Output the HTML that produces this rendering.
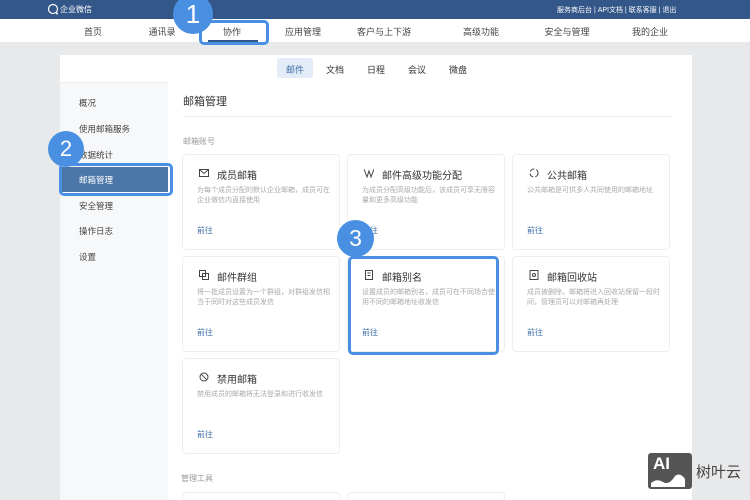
<!DOCTYPE html>
<html><head><meta charset="utf-8"><style>
*{margin:0;padding:0;box-sizing:border-box}
html{width:750px;height:500px;overflow:hidden}
body{width:750px;height:500px;overflow:hidden;background:#e8e9eb;font-family:"Liberation Sans","Noto Sans CJK SC",sans-serif;position:relative;color:#333}
.a{position:absolute}
.top{left:0;top:0;width:750px;height:19px;background:#34578a;color:#fff;font-size:8px}
.nav{left:0;top:19px;width:750px;height:23px;background:#fff;font-size:9px;color:#444}
.nav span{position:absolute;top:6px;transform:translateX(-50%)}
.panel{left:60px;top:55px;width:632px;height:445px;background:#fff}
.sub span{position:absolute;top:63px;font-size:9px;color:#333;transform:translateX(-50%)}
.side{left:60px;top:82px;width:108px;height:418px;background:#f7f8fa;border-top:1px solid #eee}
.si{position:absolute;left:79px;font-size:8.5px;color:#444}
.card{position:absolute;width:158px;height:96px;border:1px solid #eee;border-radius:4px;background:#fff}
.card .t{position:absolute;left:34px;top:12px;font-size:10px;color:#333}
.card .ic{position:absolute;left:16px;top:13px;width:10px;height:10px}
.card .d{position:absolute;left:14px;top:31px;width:134px;font-size:7px;line-height:10px;color:#aaa}
.card .g{position:absolute;left:14px;top:70px;font-size:8px;color:#3c6ea8}
.circ{position:absolute;border-radius:50%;background:#4a90e2;color:#fff;text-align:center;font-family:"Liberation Sans",sans-serif}
.box{position:absolute;border:3px solid #4a90e2;border-radius:5px}
</style></head><body>
<div class="a top">
<span class="a" style="left:60px;top:4px">企业微信</span>
<svg class="a" style="left:47px;top:3px" width="12" height="12" viewBox="0 0 12 12"><circle cx="6" cy="6" r="4.5" fill="none" stroke="#fff" stroke-width="1.2"/><circle cx="10" cy="10.5" r="1" fill="#fff"/></svg>
<span class="a" style="left:557px;top:5px;font-size:7px">服务商后台 | API文档 | 联系客服 | 退出</span>
</div>
<div class="a nav">
<span style="left:93px">首页</span><span style="left:162px">通讯录</span><span style="left:232px">协作</span><span style="left:303px">应用管理</span><span style="left:384px">客户与上下游</span><span style="left:481px">高级功能</span><span style="left:567px">安全与管理</span><span style="left:650px">我的企业</span>
<div class="a" style="left:208px;top:21px;width:50px;height:2px;background:#34578a"></div>
</div>
<div class="a panel"></div>
<div class="a" style="left:277px;top:58px;width:36px;height:20px;background:#e3ecf7;border-radius:2px"></div>
<div class="sub"><span style="left:295px;color:#3c6ea8">邮件</span><span style="left:335px">文档</span><span style="left:376px">日程</span><span style="left:417px">会议</span><span style="left:458px">微盘</span></div>
<div class="a side"></div>
<div class="si" style="top:97px">概况</div>
<div class="si" style="top:123px">使用邮箱服务</div>
<div class="si" style="top:149px">数据统计</div>
<div class="a" style="left:62px;top:167px;width:106px;height:25px;background:#4a76a8"></div>
<div class="si" style="top:174px;color:#fff">邮箱管理</div>
<div class="si" style="top:200px">安全管理</div>
<div class="si" style="top:225px">操作日志</div>
<div class="si" style="top:251px">设置</div>
<div class="a" style="left:183px;top:93px;font-size:11px;color:#333">邮箱管理</div>
<div class="a" style="left:183px;top:116px;width:490px;height:1px;background:#eee"></div>
<div class="a" style="left:183px;top:136px;font-size:8px;color:#999">邮箱账号</div>

<div class="card" style="left:182px;top:154px"><svg class="ic" viewBox="0 0 10 10"><rect x="0.5" y="1.5" width="9" height="7" fill="none" stroke="#444"/><path d="M1 2l4 3.5 4-3.5" fill="none" stroke="#444"/></svg><div class="t">成员邮箱</div><div class="d">为每个成员分配的默认企业邮箱，成员可在企业微信内直接使用</div><div class="g">前往</div></div>
<div class="card" style="left:347px;top:154px"><svg class="ic" viewBox="0 0 10 10"><path d="M0 1l3 8 2-6 2 6 3-8" fill="none" stroke="#444"/></svg><div class="t">邮件高级功能分配</div><div class="d">为成员分配高级功能后，该成员可享无限容量和更多高级功能</div><div class="g">前往</div></div>
<div class="card" style="left:512px;top:154px"><svg class="ic" viewBox="0 0 10 10"><circle cx="5" cy="5" r="4" fill="none" stroke="#444" stroke-dasharray="5 2"/></svg><div class="t">公共邮箱</div><div class="d">公共邮箱是可供多人共同使用的邮箱地址</div><div class="g">前往</div></div>
<div class="card" style="left:182px;top:256px"><svg class="ic" viewBox="0 0 10 10"><rect x="0.5" y="0.5" width="6" height="6" fill="none" stroke="#444"/><rect x="3.5" y="3.5" width="6" height="6" fill="none" stroke="#444"/></svg><div class="t">邮件群组</div><div class="d">将一批成员设置为一个群组，对群组发信相当于同时对这些成员发信</div><div class="g">前往</div></div>
<div class="card" style="left:347px;top:256px"><svg class="ic" viewBox="0 0 10 10"><rect x="1.5" y="0.5" width="7" height="9" fill="none" stroke="#444"/><path d="M3.5 3h3M3.5 5.5h3" stroke="#444"/></svg><div class="t">邮箱别名</div><div class="d">设置成员的邮箱别名，成员可在不同场合使用不同的邮箱地址收发信</div><div class="g">前往</div></div>
<div class="card" style="left:512px;top:256px"><svg class="ic" viewBox="0 0 10 10"><rect x="1" y="0.5" width="8" height="9" fill="none" stroke="#444"/><circle cx="5" cy="5" r="1.5" fill="none" stroke="#444"/></svg><div class="t">邮箱回收站</div><div class="d">成员被删除，邮箱将进入回收站保留一段时间，管理员可以对邮箱再处理</div><div class="g">前往</div></div>
<div class="card" style="left:182px;top:358px"><svg class="ic" viewBox="0 0 10 10"><circle cx="5" cy="5" r="4" fill="none" stroke="#444"/><path d="M2.2 2.2l5.6 5.6" stroke="#444"/></svg><div class="t">禁用邮箱</div><div class="d">禁用成员的邮箱将无法登录和进行收发信</div><div class="g">前往</div></div>
<div class="a" style="left:181px;top:473px;font-size:8px;color:#999">管理工具</div>
<div class="card" style="left:182px;top:492px;height:8px;border-bottom:none;border-radius:4px 4px 0 0"></div><div class="card" style="left:347px;top:492px;height:8px;border-bottom:none;border-radius:4px 4px 0 0"></div>

<div class="box" style="left:199px;top:20px;width:70px;height:25px"></div>
<div class="circ" style="left:173px;top:-6px;width:40px;height:40px;font-size:26px;line-height:40px">1</div>
<div class="box" style="left:59px;top:163px;width:114px;height:33px"></div>
<div class="circ" style="left:48px;top:131px;width:36px;height:36px;font-size:22px;line-height:36px">2</div>
<div class="box" style="left:348px;top:256px;width:151px;height:99px"></div>
<div class="circ" style="left:337px;top:220px;width:37px;height:37px;font-size:23px;line-height:37px">3</div>

<div class="a" style="left:648px;top:453px;width:44px;height:36px;background:#555;border-radius:3px">
<span class="a" style="left:5px;top:1px;font-size:17px;font-weight:bold;color:#fff">AI</span>
<svg class="a" style="left:3px;top:18px" width="38" height="16" viewBox="0 0 38 16"><path d="M0 12q6-5 12-1t12-6q5-4 10 3v8H0z" fill="#fff"/></svg>
</div>
<div class="a" style="left:696px;top:461px;font-size:15px;color:#444">树叶云</div>
</body></html>
